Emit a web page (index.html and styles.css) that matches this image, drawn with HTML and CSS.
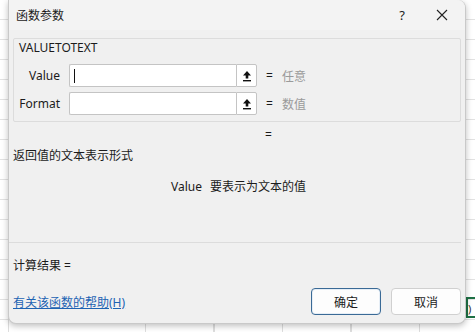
FILE: index.html
```html
<!DOCTYPE html>
<html lang="zh-cn">
<head>
    <meta charset="UTF-8">
    <title>函数参数</title>
    <link rel="stylesheet" href="styles.css">
</head>
<body>
    <div class="sheet-cell"></div>
    <div class="sheet-paren">)</div>

    <div class="dialog">
        <div class="titlebar">
            <span class="title">函数参数</span>
            <span class="tb-help">?</span>
            <span class="tb-close">
                <svg width="12" height="12" viewBox="0 0 12 12"><path d="M1 1 L11 11 M11 1 L1 11" stroke="#222" stroke-width="1.1" fill="none"/></svg>
            </span>
        </div>

        <div class="group">
            <div class="group-title">VALUETOTEXT</div>
            <div class="arg-row">
                <label class="arg-label">Value</label>
                <div class="arg-input">
                    <div class="field"><span class="caret"></span></div>
                    <div class="pick">
                        <svg width="10" height="12" viewBox="0 0 10 12"><path d="M5 1 L9 5.5 L6.3 5.5 L6.3 8.5 L3.7 8.5 L3.7 5.5 L1 5.5 Z" fill="#111"/><rect x="1" y="10" width="8" height="1.4" fill="#111"/></svg>
                    </div>
                </div>
                <span class="eq">=</span>
                <span class="hint">任意</span>
            </div>
            <div class="arg-row">
                <label class="arg-label">Format</label>
                <div class="arg-input">
                    <div class="field"></div>
                    <div class="pick">
                        <svg width="10" height="12" viewBox="0 0 10 12"><path d="M5 1 L9 5.5 L6.3 5.5 L6.3 8.5 L3.7 8.5 L3.7 5.5 L1 5.5 Z" fill="#111"/><rect x="1" y="10" width="8" height="1.4" fill="#111"/></svg>
                    </div>
                </div>
                <span class="eq">=</span>
                <span class="hint">数值</span>
            </div>
        </div>

        <div class="result-eq">=</div>
        <div class="desc">返回值的文本表示形式</div>
        <div class="arg-desc"><span class="arg-name">Value</span>要表示为文本的值</div>

        <div class="separator"></div>
        <div class="calc">计算结果 =</div>

        <div class="footer">
            <a href="#" class="help-link">有关该函数的帮助(H)</a>
            <div class="buttons">
                <button class="btn btn-primary">确定</button>
                <button class="btn">取消</button>
            </div>
        </div>
    </div>
</body>
</html>
```

FILE: styles.css
```css
* {
    margin: 0;
    padding: 0;
    box-sizing: border-box;
}

body {
    width: 475px;
    height: 332px;
    overflow: hidden;
    position: relative;
    font-family: "Noto Sans", "Noto Sans CJK SC", sans-serif;
    font-size: 12px;
    color: #1b1b1b;
    background-color: #fff;
    background-image:
        repeating-linear-gradient(to right, transparent 0, transparent 8px, #dedede 8px, #dedede 9px, transparent 9px, transparent 68.5px),
        repeating-linear-gradient(to bottom, transparent 0, transparent 19px, #e2e2e2 19px, #e2e2e2 20px);
}

.sheet-cell {
    position: absolute;
    left: 466px;
    top: 297px;
    width: 20px;
    height: 21px;
    border: 2px solid #1e7145;
}

.sheet-paren {
    position: absolute;
    left: 468px;
    top: 301px;
    font-size: 11px;
    color: #333;
}

.dialog {
    position: relative;
    margin-left: 8px;
    width: 458px;
    height: 324px;
    background: #f0f0f0;
    border: 1px solid #c9c9c9;
    border-top: none;
    border-radius: 0 8px 8px 8px;
    box-shadow: 0 2px 6px rgba(0, 0, 0, 0.25);
    display: flex;
    flex-direction: column;
}

.titlebar {
    height: 30px;
    display: flex;
    align-items: center;
    padding-left: 7px;
    background: #f3f3f3;
    border-radius: 0 8px 0 0;
}

.title {
    flex: 1;
    font-size: 12px;
}

.tb-help {
    width: 14px;
    text-align: center;
    font-size: 13px;
    margin-right: 27px;
}

.tb-close {
    display: flex;
    margin-right: 17px;
}

.group {
    margin: 8px 4px 0 4px;
    height: 84px;
    border: 1px solid #dcdcdc;
    border-radius: 2px;
    padding: 2px 0 0 5px;
}

.group-title {
    line-height: 14px;
}

.arg-row {
    display: flex;
    align-items: center;
    height: 23px;
    margin-top: 5px;
}

.group-title + .arg-row {
    margin-top: 9px;
}

.arg-label {
    width: 41px;
    text-align: right;
    margin-right: 9px;
    font-size: 12px;
}

.arg-input {
    display: flex;
    height: 23px;
}

.field {
    width: 167px;
    height: 23px;
    background: #fff;
    border: 1px solid #c4c4c4;
    border-right: none;
    border-radius: 2px 0 0 2px;
    padding: 4px 4px;
}

.caret {
    display: block;
    width: 1px;
    height: 14px;
    background: #111;
}

.pick {
    width: 21px;
    height: 23px;
    background: #fff;
    border: 1px solid #c4c4c4;
    border-radius: 0 2px 2px 0;
    display: flex;
    align-items: center;
    justify-content: center;
}

.eq {
    margin-left: 9px;
    width: 16px;
}

.hint {
    color: #9a9a9a;
}

.result-eq {
    margin-top: 5px;
    padding-left: 256px;
    line-height: 16px;
}

.desc {
    margin-top: 5px;
    padding-left: 4px;
    line-height: 16px;
}

.arg-desc {
    margin-top: 15px;
    padding-left: 162px;
    line-height: 16px;
}

.arg-name {
    margin-right: 8px;
}

.separator {
    margin: 47px 4px 0 0;
    height: 1px;
    background: #dcdcdc;
}

.calc {
    margin-top: 15px;
    padding-left: 4px;
    line-height: 16px;
}

.footer {
    margin-top: 14px;
    display: flex;
    align-items: center;
    justify-content: space-between;
    padding: 0 4px;
}

.help-link {
    color: #1d63b3;
    text-decoration: underline;
}

.buttons {
    display: flex;
    gap: 10px;
}

.btn {
    width: 70px;
    height: 27px;
    background: #fdfdfd;
    border: 1px solid #d0d0d0;
    border-radius: 4px;
    font-family: "Noto Sans CJK SC", sans-serif;
    font-size: 12px;
    color: #1b1b1b;
}

.btn-primary {
    border: 1px solid #3a6a96;
    box-shadow: inset 0 0 0 1px #e6eef6;
}
```
